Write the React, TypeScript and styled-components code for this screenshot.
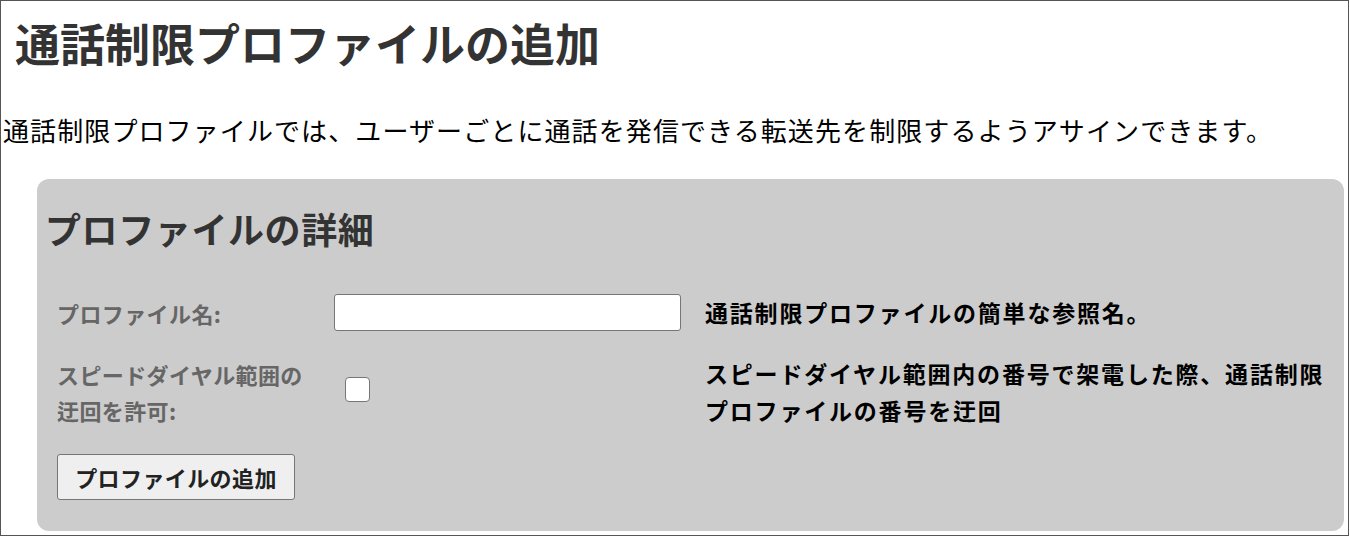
import React, { useState } from 'react';
import styled, { createGlobalStyle } from 'styled-components';

const GlobalStyle = createGlobalStyle`
    html, body {
        margin: 0;
        padding: 0;
        background: #ffffff;
    }
    body {
        font-family: "Noto Sans CJK JP", "Noto Sans", sans-serif;
    }
`;

const Frame = styled.div`
    width: 1349px;
    height: 536px;
    box-sizing: border-box;
    border: 1px solid #555555;
    padding: 0 2px 0 2px;
    overflow: hidden;
`;

const Title = styled.h1`
    margin: 14px 0 0 12px;
    font-size: 45px;
    line-height: 56px;
    font-weight: 700;
    color: #333333;
    letter-spacing: 0;
`;

const Intro = styled.p`
    margin: 41px 0 0 0;
    font-size: 26px;
    line-height: 36px;
    font-weight: 400;
    color: #000000;
    letter-spacing: 1.1px;
`;

const Panel = styled.div`
    margin: 31px 2px 0 34px;
    background: #cccccc;
    border-radius: 12px;
    padding: 25px 20px 31px 8px;
`;

const PanelTitle = styled.h2`
    margin: 0 0 42px 0;
    font-size: 36px;
    line-height: 48px;
    font-weight: 700;
    color: #333333;
    letter-spacing: 0.6px;
`;

const Form = styled.div`
    display: grid;
    grid-template-columns: 277px 371px 1fr;
    row-gap: 24px;
    align-items: center;
    padding-left: 12px;
`;

const Label = styled.label`
    font-size: 22px;
    line-height: 36px;
    font-weight: 700;
    color: #666666;
    letter-spacing: 0.4px;
    max-width: 252px;
`;

const Hint = styled.div`
    font-size: 23px;
    line-height: 37px;
    font-weight: 700;
    color: #000000;
    letter-spacing: 1.8px;
    white-space: nowrap;
`;

const TextInput = styled.input`
    width: 347px;
    height: 37px;
    box-sizing: border-box;
    border: 1px solid #767676;
    border-radius: 3px;
    background: #ffffff;
    margin: 0;
    font-size: 18px;
    padding: 2px 6px;
`;

const Check = styled.input`
    appearance: none;
    width: 25px;
    height: 25px;
    margin: 0 0 0 11px;
    border: 1px solid #767676;
    border-radius: 4px;
    background: #ffffff;
    cursor: pointer;

    &:checked {
        background: #0075ff;
        border-color: #0075ff;
    }
`;

const SubmitButton = styled.button`
    grid-column: 1 / 2;
    justify-self: start;
    width: 238px;
    height: 46px;
    margin-top: 1px;
    box-sizing: border-box;
    border: 1px solid #767676;
    border-radius: 3px;
    background: #efefef;
    color: #222222;
    font-family: inherit;
    font-size: 22px;
    font-weight: 700;
    letter-spacing: 0.4px;
    cursor: pointer;
`;

export default function App() {
    const [name, setName] = useState('');
    const [bypass, setBypass] = useState(false);

    return (
        <Frame>
            <GlobalStyle />
            <Title>通話制限プロファイルの追加</Title>
            <Intro>通話制限プロファイルでは、ユーザーごとに通話を発信できる転送先を制限するようアサインできます。</Intro>
            <Panel>
                <PanelTitle>プロファイルの詳細</PanelTitle>
                <Form>
                    <Label htmlFor="profile-name">プロファイル名:</Label>
                    <div>
                        <TextInput id="profile-name" type="text" value={name} onChange={(e) => setName(e.target.value)} />
                    </div>
                    <Hint>通話制限プロファイルの簡単な参照名。</Hint>

                    <Label htmlFor="bypass">スピードダイヤル範囲の迂回を許可:</Label>
                    <div>
                        <Check id="bypass" type="checkbox" checked={bypass} onChange={(e) => setBypass(e.target.checked)} />
                    </div>
                    <Hint>
                        スピードダイヤル範囲内の番号で架電した際、通話制限
                        <br />
                        プロファイルの番号を迂回
                    </Hint>

                    <SubmitButton type="button">プロファイルの追加</SubmitButton>
                </Form>
            </Panel>
        </Frame>
    );
}
